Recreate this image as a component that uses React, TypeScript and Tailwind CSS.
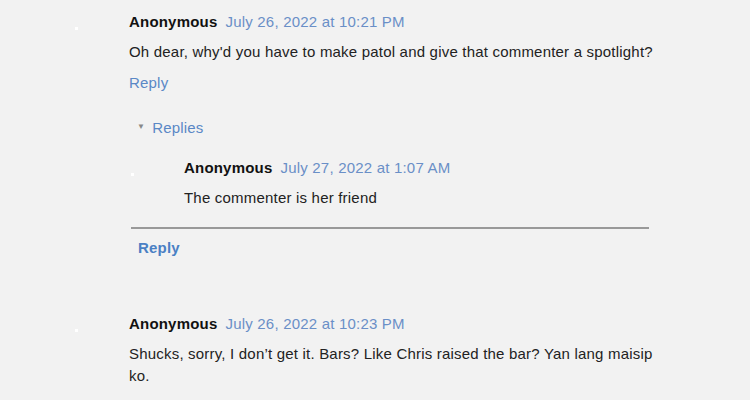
import React from "react";

function Dot({ top }: { top: string }) {
  return <div className={`w-[3px] h-[3px] bg-white ${top}`} />;
}

export default function App() {
  return (
    <div
      className="w-[750px] h-[400px] overflow-hidden bg-[#f2f2f2] text-[15px] leading-[22px] tracking-[0.2px] text-[#222]"
      style={{ fontFamily: '"Liberation Sans", Arial, sans-serif' }}
    >
      {/* Comment 1 */}
      <div className="flex pt-[11px] pl-[75px]">
        <div className="w-[54px] shrink-0">
          <Dot top="mt-[16px]" />
        </div>
        <div className="flex-1">
          <div className="flex items-baseline">
            <span className="font-bold text-[#111]">Anonymous</span>
            <span className="ml-[8px] text-[#6a8fc7]">July 26, 2022 at 10:21 PM</span>
          </div>
          <div className="mt-[8px] text-[#222]">
            Oh dear, why'd you have to make patol and give that commenter a spotlight?
          </div>
          <div className="mt-[9px] text-[#5a88c6]">Reply</div>
          <div className="mt-[23px] flex items-center pl-[8px]">
            <span className="text-[8px] leading-[8px] text-[#888] mr-[7px] -mt-[3px]">▼</span>
            <span className="text-[#5a88c6]">Replies</span>
          </div>
        </div>
      </div>
      {/* Nested reply */}
      <div className="ml-[131px] w-[518px]">
        <div className="flex mt-[18px]">
          <div className="w-[53px] shrink-0">
            <Dot top="mt-[16px]" />
          </div>
          <div className="flex-1">
            <div className="flex items-baseline">
              <span className="font-bold text-[#111]">Anonymous</span>
              <span className="ml-[8px] text-[#6a8fc7]">July 27, 2022 at 1:07 AM</span>
            </div>
            <div className="mt-[8px] text-[#222]">The commenter is her friend</div>
          </div>
        </div>
        <div className="mt-[18px] h-[2px] bg-[#999]" />
        <div className="mt-[8px] pl-[7px] font-bold text-[#4a80c4]">Reply</div>
      </div>
      {/* Comment 3 */}
      <div className="flex mt-[54px] pl-[75px]">
        <div className="w-[54px] shrink-0">
          <Dot top="mt-[16px]" />
        </div>
        <div className="flex-1 pr-[90px]">
          <div className="flex items-baseline">
            <span className="font-bold text-[#111]">Anonymous</span>
            <span className="ml-[8px] text-[#6a8fc7]">July 26, 2022 at 10:23 PM</span>
          </div>
          <div className="mt-[8px] text-[#222]">
            Shucks, sorry, I don’t get it. Bars? Like Chris raised the bar? Yan lang maisip ko.
          </div>
        </div>
      </div>
    </div>
  );
}
